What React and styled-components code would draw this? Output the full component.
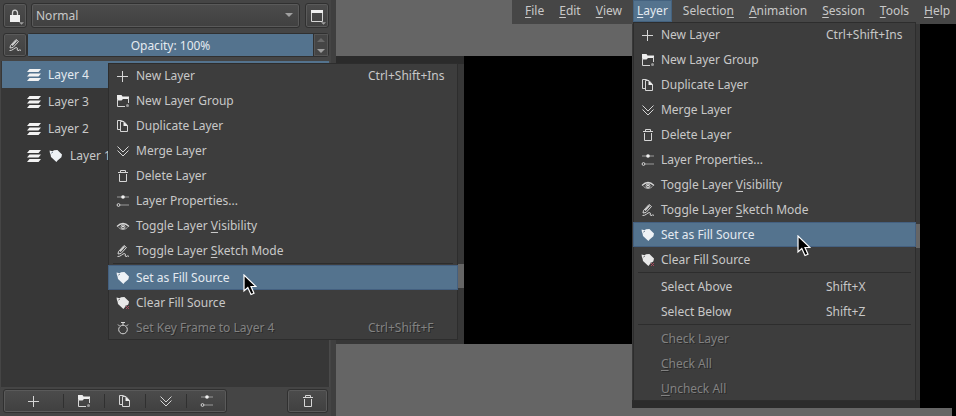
import React from "react";
import styled, { createGlobalStyle, css } from "styled-components";

const c = {
  desk: "#656565",
  panel: "#454545",
  menu: "#3d3d3d",
  list: "#373737",
  line: "#2d2d2d",
  accent: "#54738e",
  text: "#c8c8c8",
  bright: "#e4eaf0",
  dim: "#828282",
};

const GlobalStyle = createGlobalStyle`
  * { box-sizing: border-box; }
  body {
    margin: 0;
    background: ${c.desk};
    color: ${c.text};
    font: 12px/18px "Noto Sans", sans-serif;
    overflow: hidden;
  }
  button, input, select { font: inherit; color: inherit; }
  ul { list-style: none; margin: 0; padding: 0; }
`;

/* ---------- icons ---------- */

const Svg = styled.svg`
  display: block;
  flex: none;
  width: 16px;
  height: 16px;
  fill: none;
  stroke: #d6d6d6;
  stroke-width: 1;
`;

const tagPath =
  "M1.600 2.600L4.600 3.200L6 2.300L9.400 2L14 6.400L13.400 9.200L9.600 12.600L8.400 14L3 9L2.600 6.800L1.800 4.600Z";

const glyphs = {
  plus: <path d="M7.500 3v11M2 8.500h11" />,
  group: (
    <>
      <path d="M2 2h4.500l1 1.500H14V6H8L6.500 7.500H2z" fill="#eee" stroke="none" />
      <path d="M2.500 6v7.500H10M13.500 5v5" />
      <circle cx="12.500" cy="12.500" r="1.500" fill="#999" stroke="none" />
    </>
  ),
  duplicate: (
    <>
      <path d="M5 11.500H2.500v-9h4l1.500 1" />
      <path d="M5.500 3.500h3.500l3.500 4v6h-7z" />
      <path d="M8.500 3.500l4.500 4.500H8.500z" fill="#eee" stroke="none" />
    </>
  ),
  merge: <path d="M2.500 3.500L8 9l5.500-5.500M2.500 7.500L8 13l5.500-5.500" />,
  trash: <path d="M3 4.500h10M5.500 4V2.500h5V4M4.500 6v7.500h7V6" />,
  sliders: (
    <>
      <path d="M2 4h12M5 12h9" stroke="#9a9a9a" />
      <circle cx="8" cy="4" r="1.800" fill="#f2f2f2" stroke="none" />
      <circle cx="3.500" cy="12" r="1.400" />
    </>
  ),
  eye: (
    <>
      <path d="M2 8.500Q8 2.500 14 8.500" strokeWidth="1.300" />
      <path d="M3.500 9.500Q8 13.500 12.500 9.500" stroke="#a8a8a8" />
      <circle cx="8" cy="8.800" r="2" />
      <circle cx="8" cy="8.500" r="1" fill="#eee" stroke="none" />
    </>
  ),
  sketch: (
    <>
      <path d="M3.500 8.500L9 2.500l2.500 2L6 10.500l-3 .5z" />
      <path d="M5 8.500l4.500-5" strokeWidth="1.500" />
      <path d="M2.500 13.500c3 .5 5-3 7-3s-.5 3 1.500 3 1-1.500 3 0" />
    </>
  ),
  tag: (
    <>
      <path d={tagPath} fill="#eef2f6" stroke="none" />
      <path d="M3.200 5.200l1.800-1" stroke="#68788a" strokeWidth="0.800" />
    </>
  ),
  tagClear: (
    <>
      <path d={tagPath} fill="#e8e8e8" stroke="none" />
      <path d="M3.200 5.200l1.800-1" stroke="#666" strokeWidth="0.800" />
      <path d="M10.500 10.500H15V15h-4.500z" fill="#3d3d3d" stroke="none" />
      <path d="M11 11l3 3M14 11l-3 3" stroke="#a84a5c" />
    </>
  ),
  timer: (
    <>
      <circle cx="8" cy="9.500" r="4.300" />
      <path d="M6 2.500h4M8 3v2M3 4.500l1.500 1.500M13 4.500L11.500 6" />
    </>
  ),
  layers: (
    <path
      d="M3.500 2h11.500l-2.500 3H1zM3.500 6.500h11.500l-2.500 3H1zM3.500 11h11.500l-2.500 3H1z"
      fill="#f2f2f2"
      stroke="none"
    />
  ),
  lock: (
    <>
      <rect x="3" y="7" width="10" height="7" fill="#efefef" stroke="none" />
      <path d="M5.500 7V5a2.500 2.800 0 0 1 5 0v2" strokeWidth="1.300" />
    </>
  ),
  window: (
    <>
      <path d="M2.500 2.500h11v11h-11z" />
      <path d="M2 2h12v3H2z" fill="#efefef" stroke="none" />
    </>
  ),
};

const Icon = ({ name }) => (
  <Svg viewBox="0 0 16 16" aria-hidden="true">
    {glyphs[name]}
  </Svg>
);

const Caret = styled.svg`
  display: block;
  width: 8px;
  height: 4px;
  fill: ${(p) => (p.$dim ? "#686868" : "#a0a0a0")};
`;
const CaretDown = ({ className }) => (
  <Caret className={className} viewBox="0 0 8 4" aria-hidden="true">
    <path d="M0 0h8L4 4z" />
  </Caret>
);
const CaretUp = () => (
  <Caret $dim viewBox="0 0 8 4" aria-hidden="true">
    <path d="M0 4h8L4 0z" />
  </Caret>
);

const Pointer = styled.svg`
  position: absolute;
  z-index: 2;
  left: ${(p) => p.$x}px;
  top: ${(p) => p.$y}px;
  width: 14px;
  height: 22px;
  fill: #000;
  stroke: #fff;
  stroke-width: 1.2;
`;

/* ---------- window ---------- */

const Screen = styled.div`
  display: flex;
  min-height: 100vh;
  position: relative;
`;

const Docker = styled.section`
  display: flex;
  flex-direction: column;
  flex: none;
  width: 336px;
  padding: 3px 1px;
  background: ${c.panel};
  border-right: 5px solid #3f3f3f;
`;

const Row = styled.div`
  display: flex;
  gap: ${(p) => p.$gap}px;
  padding: 0 1px 0 2px;
  margin-bottom: ${(p) => p.$below || 0}px;
`;

const raised = css`
  background: linear-gradient(#4c4c4c, #404040);
  border: 1px solid #303030;
  border-radius: 3px;
  box-shadow: inset 0 0 0 1px #5a5a5a;
`;

const ToolButton = styled.button`
  ${raised}
  position: relative;
  display: flex;
  align-items: center;
  justify-content: center;
  flex: none;
  width: ${(p) => p.$width || 24}px;
  height: ${(p) => p.$height || 25}px;
  padding: 0;
`;

const CornerCaret = styled(CaretDown)`
  position: absolute;
  right: 2px;
  bottom: 2px;
  width: 5px;
  height: 3px;
`;

const Combo = styled.div`
  position: relative;
  flex: 1;
  margin-right: 1px;
`;
const Select = styled.select`
  ${raised}
  appearance: none;
  display: block;
  width: 100%;
  height: 25px;
  padding: 1px 4px 0;
`;
const ComboCaret = styled(CaretDown)`
  position: absolute;
  right: 7px;
  top: 10px;
`;

const Spin = styled.div`
  display: flex;
  flex: 1;
  height: 24px;
  border: 1px solid #303030;
  border-radius: 3px;
`;
const SpinText = styled.input`
  flex: 1;
  min-width: 0;
  padding: 2px 0 0;
  border: 0;
  background: ${c.accent};
  color: ${c.bright};
  text-align: center;
`;
const SpinButtons = styled.div`
  display: flex;
  flex-direction: column;
  width: 15px;
  background: ${c.panel};
  border-left: 1px solid #303030;
  box-shadow: inset 0 0 0 1px #555;
`;
const SpinButton = styled.button`
  display: flex;
  flex: 1;
  align-items: center;
  justify-content: center;
  padding: 0;
  border: 0;
  background: none;
`;

const LayerList = styled.ul`
  flex: 1;
  background: ${c.list};
  border: 1px solid #4a4a4a;
  border-width: 0 1px 0 0;
`;
const LayerItem = styled.li`
  display: flex;
  align-items: center;
  gap: 6px;
  height: 27px;
  padding-left: 24px;
  margin-left: 1px;
  background: ${(p) => (p.$selected ? c.accent : "transparent")};
  color: ${(p) => (p.$selected ? c.bright : c.text)};
`;

const Footer = styled.div`
  display: flex;
  justify-content: space-between;
  padding: 2px 2px 0;
`;
const ButtonGroup = styled.div`
  ${raised}
  display: flex;
  align-items: center;
  height: 24px;
`;
const GroupButton = styled.button`
  display: flex;
  align-items: center;
  justify-content: center;
  width: ${(p) => p.$width}px;
  height: 14px;
  padding: 0;
  border: 0;
  border-right: 1px solid #303030;
  background: none;
  &:last-child { border-right: 0; }
`;

const Workspace = styled.main`
  display: flex;
  flex-direction: column;
  flex: 1;
  min-width: 0;
`;

const MenuBar = styled.nav`
  display: flex;
  gap: 7px;
  height: 24px;
  margin-left: 176px;
  padding: 0 0 2px 9px;
  background: #464646;
`;
const MenuSlot = styled.div`
  position: relative;
`;
const MenuTitle = styled.button`
  display: block;
  height: 22px;
  padding: 0 4px 1px;
  border: 0;
  white-space: nowrap;
  background: ${(p) => (p.$open ? c.accent : "transparent")};
  color: ${(p) => (p.$open ? c.bright : c.text)};
  box-shadow: ${(p) => (p.$open ? "inset 0 0 0 1px #44627f" : "none")};
`;

const Canvases = styled.div`
  display: flex;
  flex: 1;
`;
const Artboard = styled.div`
  display: flex;
  width: 296px;
  height: 288px;
  margin-top: 32px;
  background: #000;
`;
const ArtboardEdge = styled.div`
  width: 128px;
  background: #373737;
  border-top: 8px solid #2b2b2b;
`;
const SideArtboard = styled.div`
  flex: 1;
  display: flex;
  flex-direction: column;
  align-items: flex-start;
  background: #000;
`;
const Backdrop = styled.div`
  flex: 1;
  width: 288px;
  background: #393939;
  border-bottom: 8px solid #2b2b2b;
`;
const LowerDesk = styled.div`
  align-self: stretch;
  height: 8px;
  margin-right: 4px;
  background: ${c.desk};
`;
const ScrollThumb = styled.div`
  width: 4px;
  height: 24px;
  margin: 200px 0 0 284px;
  background: ${c.desk};
`;
const EdgeThumb = styled.div`
  width: 6px;
  height: 24px;
  margin: 200px 0 0 122px;
  background: ${c.desk};
`;

/* ---------- menus ---------- */

const Menu = styled.ul`
  position: absolute;
  z-index: 1;
  left: ${(p) => p.$x}px;
  top: ${(p) => p.$y}px;
  width: ${(p) => p.$width}px;
  background: ${c.menu};
  box-shadow: inset 0 0 0 1px ${c.line};
`;
const MenuRow = styled.li`
  position: relative;
`;
const MenuAction = styled.button`
  display: grid;
  grid-template-columns: 21px 1fr 83px;
  align-items: center;
  width: 100%;
  height: 25px;
  padding: 0 7px;
  border: 0;
  text-align: left;
  white-space: nowrap;
  background: ${(p) => (p.$active ? c.accent : "transparent")};
  color: ${(p) => (p.$active ? c.bright : c.text)};
  box-shadow: ${(p) => (p.$active ? "inset 0 0 0 1px #446080" : "none")};
  &:disabled {
    color: ${c.dim};
    text-shadow: 1px 1px 0 #2a2a2a;
  }
`;
const IconCell = styled.span`
  padding-top: 1px;
`;
const Divider = styled.li`
  height: 2px;
  margin: 0 5px;
  border-top: 1px solid ${c.line};
`;
const Key = styled.u`
  text-underline-offset: 2px;
  text-decoration-thickness: 1px;
  text-decoration-skip-ink: none;
`;

/* "&" marks the access key that follows it. */
const Label = ({ text }) => {
  const i = text.indexOf("&");
  if (i < 0) return <span>{text}</span>;
  return (
    <span>
      {text.slice(0, i)}
      <Key>{text[i + 1]}</Key>
      {text.slice(i + 2)}
    </span>
  );
};

const layerActions = [
  { icon: "plus", text: "New Layer", keys: "Ctrl+Shift+Ins" },
  { icon: "group", text: "New Layer Group" },
  { icon: "duplicate", text: "Duplicate Layer" },
  { icon: "merge", text: "Merge Layer" },
  { icon: "trash", text: "Delete Layer" },
  { icon: "sliders", text: "Layer Properties..." },
  { icon: "eye", text: "Toggle Layer &Visibility" },
  { icon: "sketch", text: "Toggle Layer &Sketch Mode" },
];
const fillActions = [
  { icon: "tag", text: "Set as Fill Source", active: true },
  { icon: "tagClear", text: "Clear Fill Source" },
];
const contextMenu = [
  ...layerActions,
  { divider: true },
  ...fillActions,
  { icon: "timer", text: "Set Key Frame to Layer 4", keys: "Ctrl+Shift+F", disabled: true },
];
const layerMenu = [
  ...layerActions,
  ...fillActions,
  { divider: true },
  { text: "Select Above", keys: "Shift+X" },
  { text: "Select Below", keys: "Shift+Z" },
  { divider: true },
  { text: "Check Layer", disabled: true },
  { text: "&Check All", disabled: true },
  { text: "&Uncheck All", disabled: true },
];

const PopupMenu = ({ items, x, y, width, pointer }) => (
  <Menu $x={x} $y={y} $width={width}>
    {items.map((item, i) =>
      item.divider ? (
        <Divider key={i} role="separator" />
      ) : (
        <MenuRow key={i}>
          <MenuAction $active={item.active} disabled={item.disabled}>
            <IconCell>{item.icon && <Icon name={item.icon} />}</IconCell>
            <Label text={item.text} />
            <span>{item.keys}</span>
          </MenuAction>
          {item.active && (
            <Pointer $x={pointer[0]} $y={pointer[1]} viewBox="0 0 14 22" aria-hidden="true">
              <path d="M1 1v16l3.800-3.500L8 20.500l3-1.300-3-6.700h5z" />
            </Pointer>
          )}
        </MenuRow>
      )
    )}
  </Menu>
);

const layers = [
  { name: "Layer 4", selected: true },
  { name: "Layer 3" },
  { name: "Layer 2" },
  { name: "Layer 1", tagged: true },
];
const titles = ["&File", "&Edit", "&View", "&Layer", "Selectio&n", "&Animation", "&Session", "&Tools", "&Help"];

export default function App() {
  return (
    <>
      <GlobalStyle />
      <Screen>
        <Docker>
          <Row $gap={4} $below={5}>
            <ToolButton aria-label="Lock layer">
              <Icon name="lock" />
              <CornerCaret />
            </ToolButton>
            <Combo>
              <Select aria-label="Blend mode" defaultValue="Normal">
                <option>Normal</option>
              </Select>
              <ComboCaret />
            </Combo>
            <ToolButton aria-label="View options">
              <Icon name="window" />
              <CornerCaret />
            </ToolButton>
          </Row>
          <Row $gap={0} $below={4}>
            <ToolButton $height={24} aria-label="Sketch mode">
              <Icon name="sketch" />
            </ToolButton>
            <Spin>
              <SpinText aria-label="Opacity" defaultValue="Opacity: 100%" />
              <SpinButtons>
                <SpinButton aria-label="Increase"><CaretUp /></SpinButton>
                <SpinButton aria-label="Decrease"><CaretDown /></SpinButton>
              </SpinButtons>
            </Spin>
          </Row>
          <LayerList>
            {layers.map((l) => (
              <LayerItem key={l.name} $selected={l.selected}>
                <Icon name="layers" />
                {l.tagged && <Icon name="tag" />}
                <span>{l.name}</span>
              </LayerItem>
            ))}
          </LayerList>
          <Footer>
            <ButtonGroup>
              <GroupButton $width={60} aria-label="New layer"><Icon name="plus" /></GroupButton>
              <GroupButton $width={41} aria-label="New layer group"><Icon name="group" /></GroupButton>
              <GroupButton $width={41} aria-label="Duplicate layer"><Icon name="duplicate" /></GroupButton>
              <GroupButton $width={41} aria-label="Merge layer"><Icon name="merge" /></GroupButton>
              <GroupButton $width={39} aria-label="Layer properties"><Icon name="sliders" /></GroupButton>
            </ButtonGroup>
            <ToolButton $width={41} $height={24} aria-label="Delete layer"><Icon name="trash" /></ToolButton>
          </Footer>
        </Docker>

        <Workspace>
          <MenuBar>
            {titles.map((t) => {
              const open = t === "&Layer";
              return (
                <MenuSlot key={t}>
                  <MenuTitle $open={open}><Label text={t} /></MenuTitle>
                  {open && <PopupMenu items={layerMenu} x={0} y={22} width={283} pointer={[164, 13]} />}
                </MenuSlot>
              );
            })}
          </MenuBar>
          <Canvases>
            <Artboard>
              <ArtboardEdge><EdgeThumb /></ArtboardEdge>
            </Artboard>
            <SideArtboard>
              <Backdrop><ScrollThumb /></Backdrop>
              <LowerDesk />
            </SideArtboard>
          </Canvases>
        </Workspace>

        <PopupMenu items={contextMenu} x={108} y={63} width={350} pointer={[135, 9]} />
      </Screen>
    </>
  );
}
